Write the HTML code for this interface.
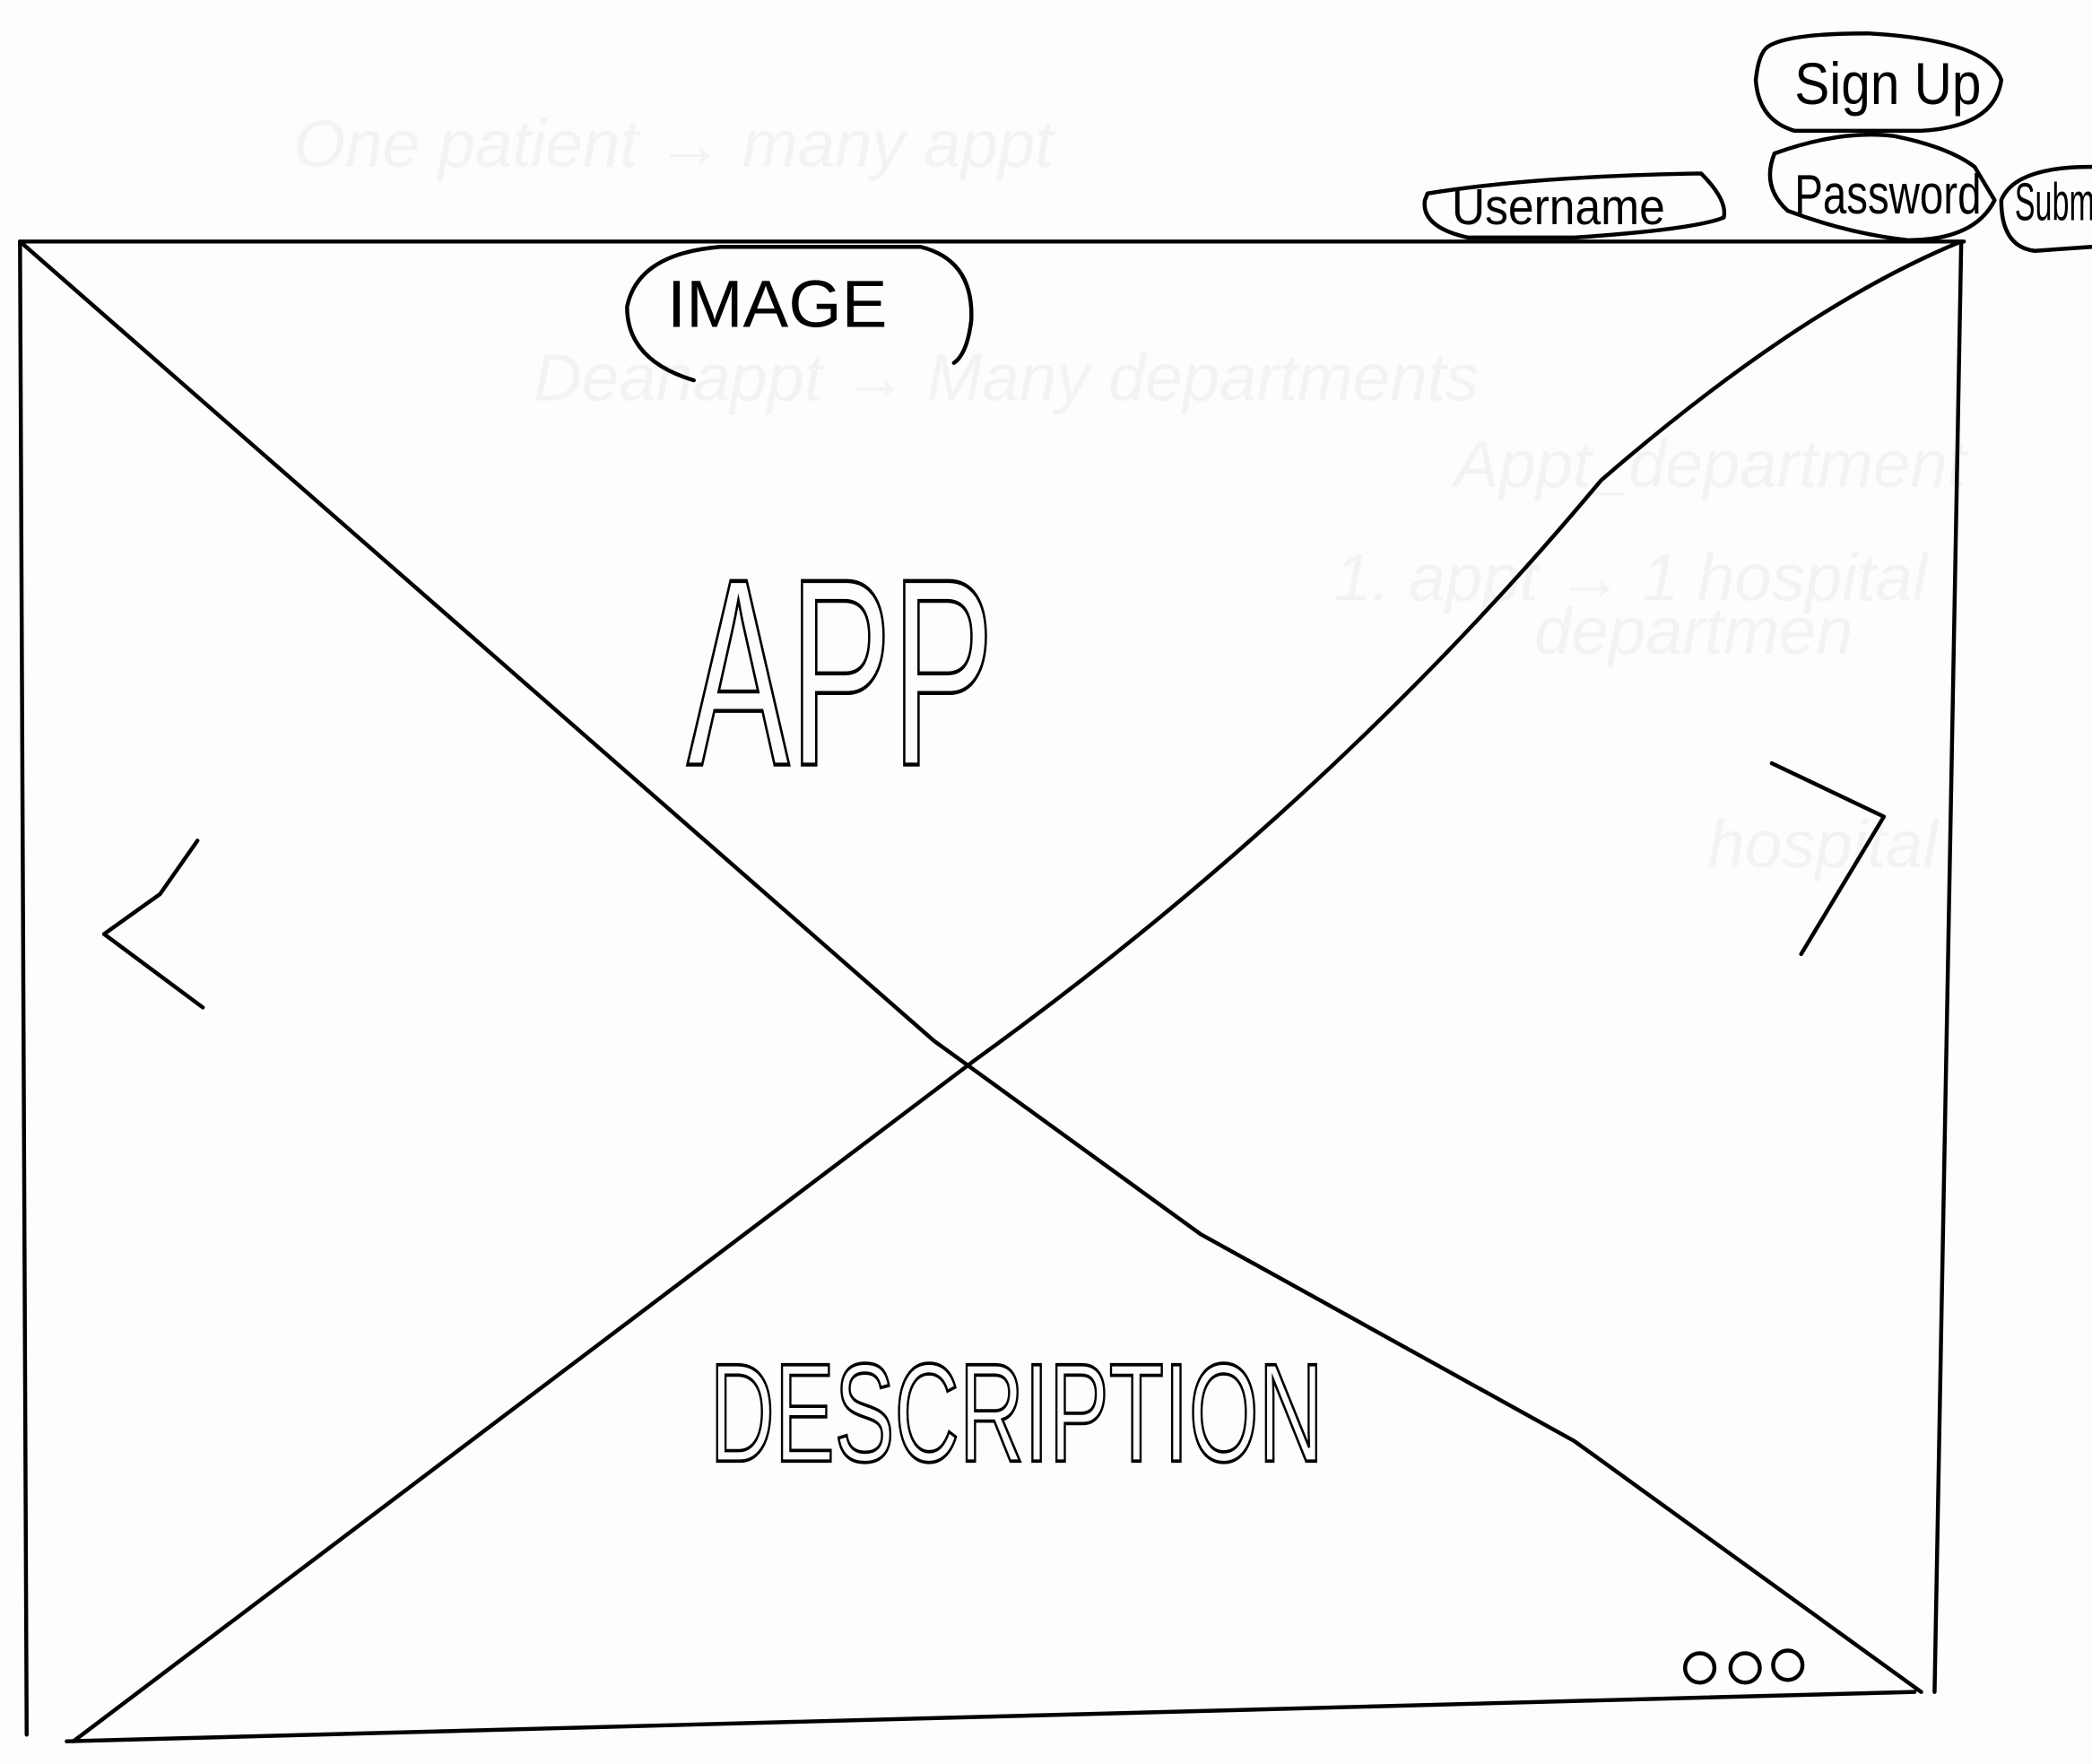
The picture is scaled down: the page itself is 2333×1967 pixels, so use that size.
<!DOCTYPE html>
<html><head><meta charset="utf-8"><style>
html,body{margin:0;padding:0;background:#fdfdfd;}
svg{display:block;}
</style></head><body>
<svg width="2333" height="1967" viewBox="0 0 1568 1322" xmlns="http://www.w3.org/2000/svg">
<rect width="1568" height="1322" fill="#fdfdfd"/>
<g fill="#f3f3f3" font-family="Liberation Sans, sans-serif" font-size="50" font-style="italic">
<text x="220" y="125">One patient → many appt</text>
<text x="1090" y="365">Appt_department</text>
<text x="400" y="300">Deanappt → Many departments</text>
<text x="1150" y="490">departmen</text>
<text x="1280" y="650">hospital</text>
<text x="1000" y="450">1. appt → 1 hospital</text>
</g>
<g fill="none" stroke="#000" stroke-width="3" stroke-linecap="round" stroke-linejoin="round">
<path d="M15 181 L1472 181"/>
<path d="M15 181 L20 1300"/>
<path d="M50 1305 L1435 1268"/>
<path d="M1470 181 L1450 1268"/>
<path d="M15 181 L700 780 L900 925 Q1000 980 1180 1080 L1440 1268"/>
<path d="M55 1305 L730 795 Q1000 600 1200 360 Q1350 230 1470 181"/>
<path d="M148 630 L120 670 L78 700 L152 755"/>
<path d="M1328 572 L1412 612 L1350 715"/>
<path d="M520 285 Q470 270 470 230 Q478 190 540 185 L690 185 Q730 195 728 240 Q725 265 715 272"/>
<path d="M1325 35 Q1340 25 1400 25 Q1490 30 1500 60 Q1495 95 1440 98 L1345 98 Q1318 90 1316 60 Q1318 40 1325 35Z"/>
<path d="M1070 145 Q1150 132 1275 130 Q1295 150 1292 163 Q1270 172 1180 178 L1100 178 Q1065 170 1068 150Z"/>
<path d="M1330 115 Q1380 97 1420 102 Q1460 110 1480 125 L1495 150 Q1480 180 1430 180 Q1385 175 1340 158 Q1320 140 1330 115Z"/>
<path d="M1568 125 Q1510 125 1500 150 Q1500 185 1525 188 L1568 185"/>
<circle cx="1274" cy="1250" r="11"/><circle cx="1308" cy="1250" r="11"/><circle cx="1340" cy="1248" r="11"/>
</g>
<g font-family="Liberation Sans, sans-serif" fill="#000">
<text x="500" y="245" font-size="50" textLength="165" lengthAdjust="spacingAndGlyphs" font-weight="300">IMAGE</text>
<text x="515" y="573" font-size="200" textLength="230" lengthAdjust="spacingAndGlyphs" fill="none" stroke="#000" stroke-width="3">APP</text>
<text x="532" y="1095" font-size="105" textLength="460" lengthAdjust="spacingAndGlyphs" fill="none" stroke="#000" stroke-width="2.5">DESCRIPTION</text>
<text x="1345" y="78" font-size="44" textLength="140" lengthAdjust="spacingAndGlyphs">Sign Up</text>
<text x="1088" y="168" font-size="38" textLength="160" lengthAdjust="spacingAndGlyphs">Username</text>
<text x="1345" y="160" font-size="42" textLength="140" lengthAdjust="spacingAndGlyphs">Password</text>
<text x="1510" y="165" font-size="40" textLength="60" lengthAdjust="spacingAndGlyphs">Subm</text>
</g>
</svg>
</body></html>
